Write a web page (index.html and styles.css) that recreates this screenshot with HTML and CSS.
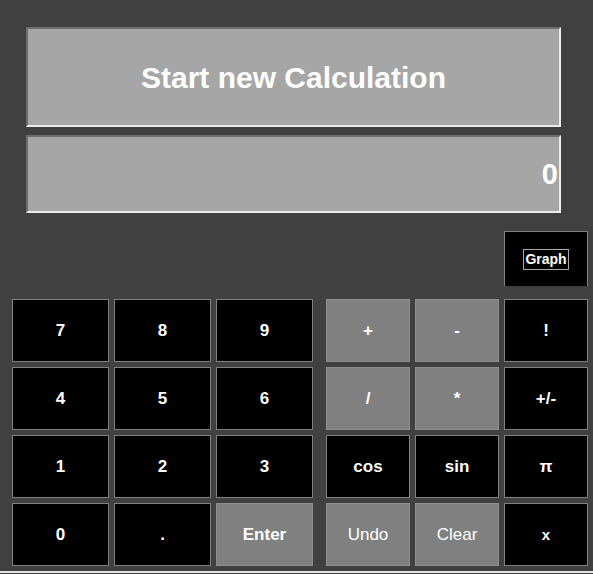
FILE: index.html
```html
<!DOCTYPE html>
<html>
<head>
<meta charset="utf-8">
<link rel="stylesheet" href="styles.css">
</head>
<body>
<div class="screen">
  <div class="title-bar">Start new Calculation</div>
  <div class="display">0</div>
  <div class="graph-row">
    <div class="graph-btn"><span class="graph-label">Graph</span></div>
  </div>
  <div class="keypad">
    <div class="pad pad-num">
      <div class="key">7</div>
      <div class="key">8</div>
      <div class="key">9</div>
      <div class="key">4</div>
      <div class="key">5</div>
      <div class="key">6</div>
      <div class="key">1</div>
      <div class="key">2</div>
      <div class="key">3</div>
      <div class="key">0</div>
      <div class="key">.</div>
      <div class="key key-gray">Enter</div>
    </div>
    <div class="pad pad-op">
      <div class="key key-gray">+</div>
      <div class="key key-gray">-</div>
      <div class="key">!</div>
      <div class="key key-gray">/</div>
      <div class="key key-gray">*</div>
      <div class="key">+/-</div>
      <div class="key">cos</div>
      <div class="key">sin</div>
      <div class="key">π</div>
      <div class="key key-gray key-light">Undo</div>
      <div class="key key-gray key-light">Clear</div>
      <div class="key key-x">x</div>
    </div>
  </div>
  <div class="bottom-line"></div>
</div>
</body>
</html>
```

FILE: styles.css
```css
html, body {
  margin: 0;
  padding: 0;
  background: #404040;
}

.screen {
  width: 593px;
  height: 574px;
  background: #404040;
  font-family: "Liberation Sans", Arial, sans-serif;
  color: #ffffff;
  overflow: hidden;
  box-sizing: border-box;
  padding-top: 27px;
}

.title-bar {
  margin: 0 32px 0 26px;
  height: 100px;
  box-sizing: border-box;
  background: #a6a6a6;
  border-top: 2px solid #6e6e6e;
  border-left: 2px solid #6e6e6e;
  border-right: 2px solid #ececec;
  border-bottom: 2px solid #ececec;
  display: flex;
  align-items: center;
  justify-content: center;
  padding-top: 2px;
  font-size: 30px;
  font-weight: bold;
}

.display {
  margin: 8px 32px 0 26px;
  height: 78px;
  box-sizing: border-box;
  background: #a6a6a6;
  border-top: 2px solid #6e6e6e;
  border-left: 2px solid #6e6e6e;
  border-right: 2px solid #ececec;
  border-bottom: 2px solid #ececec;
  display: flex;
  align-items: center;
  justify-content: flex-end;
  padding-right: 1px;
  font-size: 29px;
  font-weight: bold;
}

.graph-row {
  margin-top: 18px;
  height: 55px;
  display: flex;
  justify-content: flex-end;
  padding-right: 5px;
}

.graph-btn {
  width: 84px;
  height: 55px;
  box-sizing: border-box;
  background: #000000;
  border: 1px solid #808080;
  border-bottom: none;
  display: flex;
  align-items: center;
  justify-content: center;
}

.graph-label {
  font-weight: bold;
  font-size: 14px;
  line-height: 19px;
  padding: 0 1px;
  border: 1px solid #a8a8a8;
}

.keypad {
  margin-top: 13px;
  padding-left: 12px;
  display: flex;
  gap: 13px;
}

.pad {
  display: grid;
  grid-template-rows: repeat(4, 63px);
  gap: 5px;
}

.pad-num {
  grid-template-columns: repeat(3, 97px);
}

.pad-op {
  grid-template-columns: repeat(3, 84px);
}

.key {
  box-sizing: border-box;
  background: #000000;
  border: 1px solid #808080;
  display: flex;
  align-items: center;
  justify-content: center;
  font-size: 17px;
  font-weight: bold;
}

.key-gray {
  background: #808080;
  border-color: #8e8e8e;
}

.key-light {
  font-weight: normal;
}

.key-x {
  font-size: 15px;
}

.bottom-line {
  margin-top: 5px;
  height: 2px;
  background: #e6e6e6;
}
```
